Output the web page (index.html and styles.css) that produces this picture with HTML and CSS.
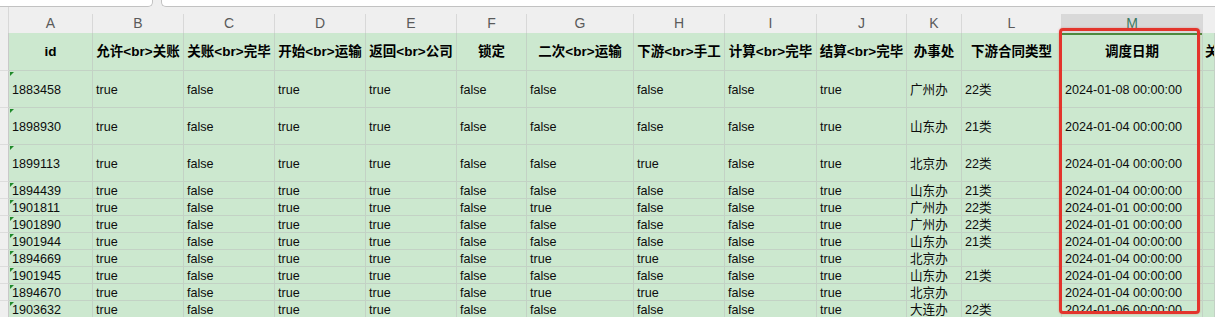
FILE: index.html
```html
<!DOCTYPE html>
<html lang="zh-CN">
<head>
<meta charset="utf-8">
<title>Sheet</title>
<link rel="stylesheet" href="styles.css">
</head>
<body>
<div class="page">
  <div class="topbar">
    <div class="tab tab-left"></div>
    <div class="tab tab-right"></div>
  </div>
  <div class="sheet">
    <!-- column letters -->
    <div class="corner"></div>
    <div class="col">A</div><div class="col">B</div><div class="col">C</div><div class="col">D</div><div class="col">E</div><div class="col">F</div><div class="col">G</div><div class="col">H</div><div class="col">I</div><div class="col">J</div><div class="col">K</div><div class="col">L</div><div class="col col-sel">M</div><div class="col col-last"></div>

    <!-- header row -->
    <div class="rh"></div>
    <div class="c h">id</div><div class="c h">允许&lt;br&gt;关账</div><div class="c h">关账&lt;br&gt;完毕</div><div class="c h">开始&lt;br&gt;运输</div><div class="c h">返回&lt;br&gt;公司</div><div class="c h">锁定</div><div class="c h">二次&lt;br&gt;运输</div><div class="c h">下游&lt;br&gt;手工</div><div class="c h">计算&lt;br&gt;完毕</div><div class="c h">结算&lt;br&gt;完毕</div><div class="c h">办事处</div><div class="c h">下游合同类型</div><div class="c h h-sel">调度日期</div><div class="c h h-left">关联</div>

    <div class="rh"></div>
    <div class="c id">1883458</div><div class="c">true</div><div class="c">false</div><div class="c">true</div><div class="c">true</div><div class="c">false</div><div class="c">false</div><div class="c">false</div><div class="c">false</div><div class="c">true</div><div class="c">广州办</div><div class="c">22类</div><div class="c">2024-01-08 00:00:00</div><div class="c"></div>

    <div class="rh"></div>
    <div class="c id">1898930</div><div class="c">true</div><div class="c">false</div><div class="c">true</div><div class="c">true</div><div class="c">false</div><div class="c">false</div><div class="c">false</div><div class="c">false</div><div class="c">true</div><div class="c">山东办</div><div class="c">21类</div><div class="c">2024-01-04 00:00:00</div><div class="c"></div>

    <div class="rh"></div>
    <div class="c id">1899113</div><div class="c">true</div><div class="c">false</div><div class="c">true</div><div class="c">true</div><div class="c">false</div><div class="c">false</div><div class="c">true</div><div class="c">false</div><div class="c">true</div><div class="c">北京办</div><div class="c">22类</div><div class="c">2024-01-04 00:00:00</div><div class="c"></div>

    <div class="rh"></div>
    <div class="c id">1894439</div><div class="c">true</div><div class="c">false</div><div class="c">true</div><div class="c">true</div><div class="c">false</div><div class="c">false</div><div class="c">false</div><div class="c">false</div><div class="c">true</div><div class="c">山东办</div><div class="c">21类</div><div class="c">2024-01-04 00:00:00</div><div class="c"></div>

    <div class="rh"></div>
    <div class="c id">1901811</div><div class="c">true</div><div class="c">false</div><div class="c">true</div><div class="c">true</div><div class="c">false</div><div class="c">true</div><div class="c">false</div><div class="c">false</div><div class="c">true</div><div class="c">广州办</div><div class="c">22类</div><div class="c">2024-01-01 00:00:00</div><div class="c"></div>

    <div class="rh"></div>
    <div class="c id">1901890</div><div class="c">true</div><div class="c">false</div><div class="c">true</div><div class="c">true</div><div class="c">false</div><div class="c">false</div><div class="c">false</div><div class="c">false</div><div class="c">true</div><div class="c">广州办</div><div class="c">22类</div><div class="c">2024-01-01 00:00:00</div><div class="c"></div>

    <div class="rh"></div>
    <div class="c id">1901944</div><div class="c">true</div><div class="c">false</div><div class="c">true</div><div class="c">true</div><div class="c">false</div><div class="c">false</div><div class="c">false</div><div class="c">false</div><div class="c">true</div><div class="c">山东办</div><div class="c">21类</div><div class="c">2024-01-04 00:00:00</div><div class="c"></div>

    <div class="rh"></div>
    <div class="c id">1894669</div><div class="c">true</div><div class="c">false</div><div class="c">true</div><div class="c">true</div><div class="c">false</div><div class="c">true</div><div class="c">true</div><div class="c">false</div><div class="c">true</div><div class="c">北京办</div><div class="c"></div><div class="c">2024-01-04 00:00:00</div><div class="c"></div>

    <div class="rh"></div>
    <div class="c id">1901945</div><div class="c">true</div><div class="c">false</div><div class="c">true</div><div class="c">true</div><div class="c">false</div><div class="c">false</div><div class="c">false</div><div class="c">false</div><div class="c">true</div><div class="c">山东办</div><div class="c">21类</div><div class="c">2024-01-04 00:00:00</div><div class="c"></div>

    <div class="rh"></div>
    <div class="c id">1894670</div><div class="c">true</div><div class="c">false</div><div class="c">true</div><div class="c">true</div><div class="c">false</div><div class="c">true</div><div class="c">true</div><div class="c">false</div><div class="c">true</div><div class="c">北京办</div><div class="c"></div><div class="c">2024-01-04 00:00:00</div><div class="c"></div>

    <div class="rh"></div>
    <div class="c id">1903632</div><div class="c">true</div><div class="c">false</div><div class="c">true</div><div class="c">true</div><div class="c">false</div><div class="c">false</div><div class="c">false</div><div class="c">false</div><div class="c">true</div><div class="c">大连办</div><div class="c">22类</div><div class="c">2024-01-06 00:00:00</div><div class="c"></div>
  </div>
  <div class="highlight"></div>
</div>
</body>
</html>
```

FILE: styles.css
```css
html, body {
  margin: 0;
  padding: 0;
  background: #efefef;
  overflow: hidden;
}

.page {
  position: relative;
  width: 1215px;
  height: 317px;
  overflow: hidden;
  font-family: "Liberation Sans", "Noto Sans CJK SC", sans-serif;
}

.topbar {
  display: flex;
  height: 7px;
  gap: 8px;
  background: #efefef;
}

.tab {
  height: 6px;
  background: #ffffff;
  border-bottom: 1px solid #c2c2c2;
}

.tab-left {
  width: 152px;
  border-right: 1px solid #c2c2c2;
  border-bottom-right-radius: 5px;
}

.tab-right {
  flex: 1;
  border-left: 1px solid #c2c2c2;
  border-bottom-left-radius: 5px;
}

.sheet {
  display: grid;
  grid-template-columns: 9px 84px 91px 91px 91px 91px 70px 107px 91px 92px 90px 55px 100px 141px 1fr;
  grid-template-rows: 26px 38px 37px 37px 37px repeat(8, 17px);
  background: #efefef;
}

.corner {
  border-right: 1px solid #d8d8d8;
}

.col {
  margin-top: 7px;
  border-right: 1px solid #d8d8d8;
  display: flex;
  align-items: center;
  justify-content: center;
  font-size: 14px;
  line-height: 16px;
  color: #5a5a5a;
  padding-bottom: 1px;
}

.col-sel {
  background: #d9d9d9;
  color: #3b7a62;
}

.col-last {
  border-right: none;
}

.rh {
  background: #efefef;
  border-right: 1px solid #c9c9c9;
  border-bottom: 1px solid #dcdcdc;
}

.c {
  position: relative;
  background: #cce8cf;
  border-right: 1px solid #c3d2c5;
  border-bottom: 1px solid #c3d2c5;
  display: flex;
  align-items: center;
  padding-left: 3px;
  padding-top: 1px;
  font-size: 12.6px;
  line-height: 14px;
  color: #0d0d0d;
  white-space: nowrap;
  overflow: hidden;
}

.h {
  justify-content: center;
  padding-left: 0;
  font-weight: bold;
  font-size: 13.5px;
  line-height: 16px;
  color: #000000;
}

.h-sel {
  box-shadow: inset 0 2px 0 #4d8a3e;
}

.h-left {
  justify-content: flex-start;
  padding-left: 2px;
}

.id::before {
  content: "";
  position: absolute;
  top: 1px;
  left: 1px;
  border-top: 4px solid #1f8a2a;
  border-right: 4px solid transparent;
}

.highlight {
  position: absolute;
  left: 1059px;
  top: 28px;
  width: 141px;
  height: 286px;
  box-sizing: border-box;
  border: 3px solid #e3342c;
  border-radius: 4px;
  box-shadow: 0 0 2px rgba(227, 52, 44, 0.45);
}
```
